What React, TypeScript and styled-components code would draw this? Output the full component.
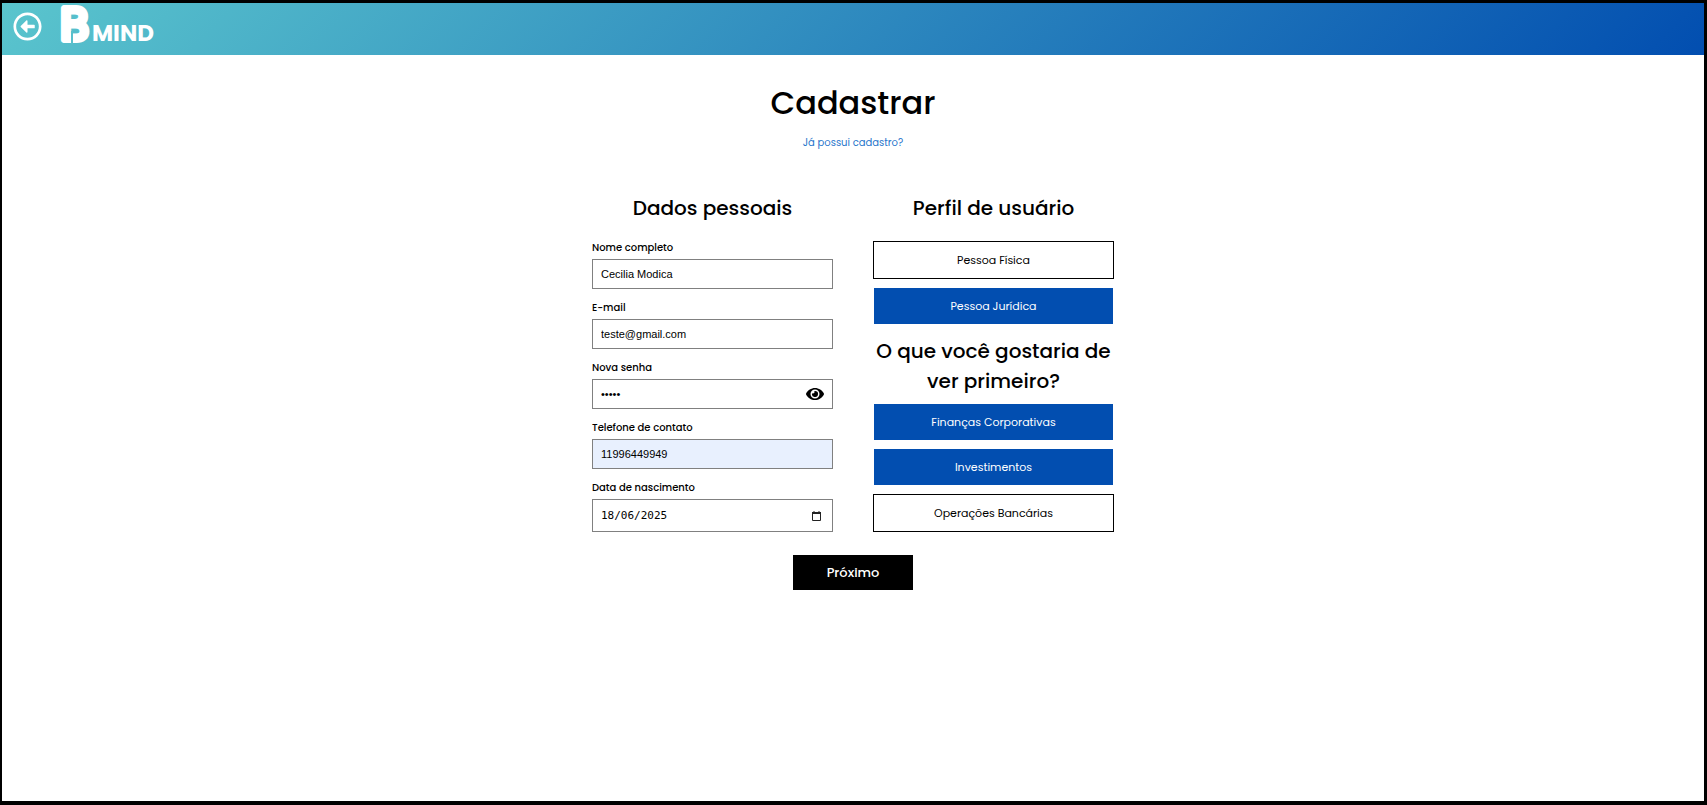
import React, { useState } from "react";
import styled, { createGlobalStyle, css } from "styled-components";
import { FaEye, FaRegArrowAltCircleLeft } from "react-icons/fa";

const GlobalStyle = createGlobalStyle`
  *, *::before, *::after { box-sizing: border-box; }
  body { margin: 0; background: #fff; color: #000; font-family: Poppins, Inter, sans-serif; }
  button, input { font: inherit; color: inherit; }
`;

const Page = styled.div`
  min-height: 100vh;
  border: solid #000;
  border-width: 3px 3px 4px 2px;
`;

const Header = styled.header`
  display: flex;
  align-items: center;
  gap: 18px;
  height: 52px;
  padding: 0 11px 6px;
  background: linear-gradient(135deg, #5ac5cd 0%, #024eb0 100%);
`;

const BackButton = styled.button`
  display: flex;
  padding: 0;
  border: 0;
  background: none;
  color: #fff;
  cursor: pointer;
`;

const Logo = styled.svg`
  display: block;
  width: 100px;
  height: 46px;
  overflow: visible;
  fill: #fff;
`;

const Main = styled.main`
  display: flex;
  flex-direction: column;
  align-items: center;
  padding: 24px 16px;
`;

const Title = styled.h1`
  margin: 0;
  font-size: 32px;
  line-height: 48px;
  font-weight: 500;
`;

const LoginLink = styled.a`
  margin-top: 8px;
  font-size: 10px;
  line-height: 16px;
  color: #1f75cb;
  text-decoration: none;
`;

const Form = styled.form`
  display: flex;
  flex-direction: column;
  align-items: center;
  gap: 23px;
  margin-top: 42px;
`;

const Columns = styled.div`
  display: flex;
  flex-wrap: wrap;
  justify-content: center;
  gap: 40px;
`;

const Column = styled.section`
  display: flex;
  flex-direction: column;
  width: 241px;
`;

const SectionTitle = styled.h2`
  margin: 0;
  font-size: 20px;
  line-height: 30px;
  font-weight: 500;
  text-align: center;
`;

const Fields = styled.div`
  display: flex;
  flex-direction: column;
  gap: 12px;
  margin-top: 18px;
`;

const Field = styled.div`
  display: flex;
  flex-direction: column;
  gap: 5px;
`;

const Label = styled.label`
  font-size: 10px;
  line-height: 13px;
  font-weight: 500;
`;

const InputBox = styled.div<{ $filled?: boolean; $tall?: boolean }>`
  display: flex;
  align-items: center;
  height: ${(p) => (p.$tall ? 33 : 30)}px;
  padding: 0 8px;
  border: 1px solid #808080;
  background: ${(p) => (p.$filled ? "#e8f0fe" : "#fff")};
`;

const Input = styled.input<{ $mono?: boolean }>`
  flex: 1;
  min-width: 0;
  padding: 0;
  border: 0;
  outline: 0;
  background: none;
  font-family: ${(p) => (p.$mono ? '"DejaVu Sans Mono", monospace' : '"Liberation Sans", Arial, sans-serif')};
  font-size: 11px;
`;

const IconButton = styled.button`
  display: flex;
  padding: 0;
  border: 0;
  background: none;
  cursor: pointer;
`;

const Options = styled.div`
  display: flex;
  flex-direction: column;
  gap: 9px;
`;

const Option = styled.button<{ $selected?: boolean }>`
  height: 38px;
  padding: 0;
  border: 1px solid #000;
  background: #fff;
  font-size: 11px;
  cursor: pointer;
  ${(p) =>
    p.$selected &&
    css`
      height: 36px;
      margin: 0 1px;
      border: 0;
      background: #024eb0;
      color: #fff;
    `}
`;

const ProfileOptions = styled(Options)`
  margin: 18px 0 12px;
`;

const TopicOptions = styled(Options)`
  margin-top: 8px;
`;

const NextButton = styled.button`
  width: 120px;
  height: 35px;
  padding: 0;
  border: 0;
  background: #000;
  color: #fff;
  font-size: 13px;
  font-weight: 500;
  cursor: pointer;
`;

function CalendarIcon() {
  return (
    <svg width="13" height="12" viewBox="0 0 13 12" fill="none" stroke="#222">
      <path d="M1.5 2.5h8v8h-8z" />
      <path d="M1 3h9" strokeWidth="2" />
      <path d="M3 1v2M8 1v2" />
    </svg>
  );
}

const fields = [
  { id: "nome", label: "Nome completo", type: "text", value: "Cecilia Modica" },
  { id: "email", label: "E-mail", type: "email", value: "teste@gmail.com" },
  { id: "senha", label: "Nova senha", type: "password", value: "12345" },
  { id: "telefone", label: "Telefone de contato", type: "tel", value: "11996449949" },
  { id: "nascimento", label: "Data de nascimento", type: "text", value: "18/06/2025" },
];

const profiles = ["Pessoa Física", "Pessoa Jurídica"];
const topics = ["Finanças Corporativas", "Investimentos", "Operações Bancárias"];

export default function App() {
  const [showPassword, setShowPassword] = useState(false);
  const [profile, setProfile] = useState("Pessoa Jurídica");
  const [chosen, setChosen] = useState(["Finanças Corporativas", "Investimentos"]);

  const toggleTopic = (t: string) =>
    setChosen((c) => (c.includes(t) ? c.filter((x) => x !== t) : [...c, t]));

  return (
    <>
      <GlobalStyle />
      <Page>
        <Header>
          <BackButton type="button" aria-label="Voltar">
            <FaRegArrowAltCircleLeft size={29} />
          </BackButton>
          <Logo viewBox="0 0 100 46" role="img" aria-label="BMind">
            <text x="0" y="37" fontFamily="Inter, sans-serif" fontSize="44" fontWeight="400" stroke="#fff" strokeWidth="6" strokeLinejoin="round">B</text>
            <path d="M12 28v13" stroke="#58c0cc" strokeWidth="2" />
            <text x="32" y="38" fontFamily="Poppins, Inter, sans-serif" fontSize="23" fontWeight="700">MIND</text>
          </Logo>
        </Header>
        <Main>
          <Title>Cadastrar</Title>
          <LoginLink href="#login">Já possui cadastro?</LoginLink>
          <Form onSubmit={(e) => e.preventDefault()}>
            <Columns>
              <Column>
                <SectionTitle>Dados pessoais</SectionTitle>
                <Fields>
                  {fields.map((f) => (
                    <Field key={f.id}>
                      <Label htmlFor={f.id}>{f.label}</Label>
                      <InputBox $filled={f.id === "telefone"} $tall={f.id === "nascimento"}>
                        <Input
                          id={f.id}
                          type={f.id === "senha" && showPassword ? "text" : f.type}
                          defaultValue={f.value}
                          $mono={f.id === "nascimento"}
                        />
                        {f.id === "senha" && (
                          <IconButton type="button" aria-label="Mostrar senha" onClick={() => setShowPassword((s) => !s)}>
                            <FaEye size={18} />
                          </IconButton>
                        )}
                        {f.id === "nascimento" && (
                          <IconButton type="button" aria-label="Abrir calendário">
                            <CalendarIcon />
                          </IconButton>
                        )}
                      </InputBox>
                    </Field>
                  ))}
                </Fields>
              </Column>
              <Column>
                <SectionTitle>Perfil de usuário</SectionTitle>
                <ProfileOptions>
                  {profiles.map((p) => (
                    <Option key={p} type="button" $selected={profile === p} onClick={() => setProfile(p)}>
                      {p}
                    </Option>
                  ))}
                </ProfileOptions>
                <SectionTitle>O que você gostaria de ver primeiro?</SectionTitle>
                <TopicOptions>
                  {topics.map((t) => (
                    <Option key={t} type="button" $selected={chosen.includes(t)} onClick={() => toggleTopic(t)}>
                      {t}
                    </Option>
                  ))}
                </TopicOptions>
              </Column>
            </Columns>
            <NextButton type="submit">Próximo</NextButton>
          </Form>
        </Main>
      </Page>
    </>
  );
}
